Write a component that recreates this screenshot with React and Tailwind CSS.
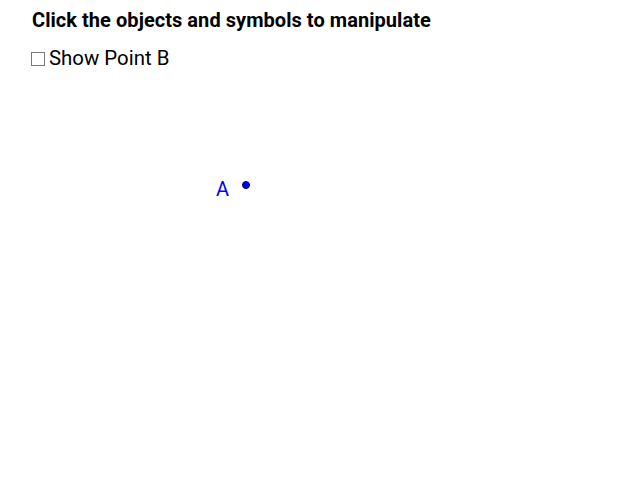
export default function App() {
  return (
    <div className="relative w-[630px] h-[500px] bg-white overflow-hidden" style={{ fontFamily: 'Roboto, "Liberation Sans", sans-serif' }}>
      {/* Toolbar text */}
      <div className="pl-[32px] pt-[8px]">
        <h1 className="text-[20px] font-bold leading-[24px] text-black tracking-[0.05px]">Click the objects and symbols to manipulate</h1>
        <label className="flex items-center mt-[14px] -ml-[1px] text-[20.4px] leading-[24px] text-black">
          <span className="w-[14px] h-[14px] border border-[#7a7a7a] bg-white mr-[4px] mt-[1px]" />
          Show Point B
        </label>
      </div>

      {/* Graphics canvas */}
      <span className="absolute left-[216px] top-[177px] text-[20px] leading-[24px] text-[#0000ff]">A</span>
      <span className="absolute left-[242px] top-[181px] w-[8px] h-[8px] rounded-full bg-[#0000ff] border border-[#000066]" />
    </div>
  )
}
